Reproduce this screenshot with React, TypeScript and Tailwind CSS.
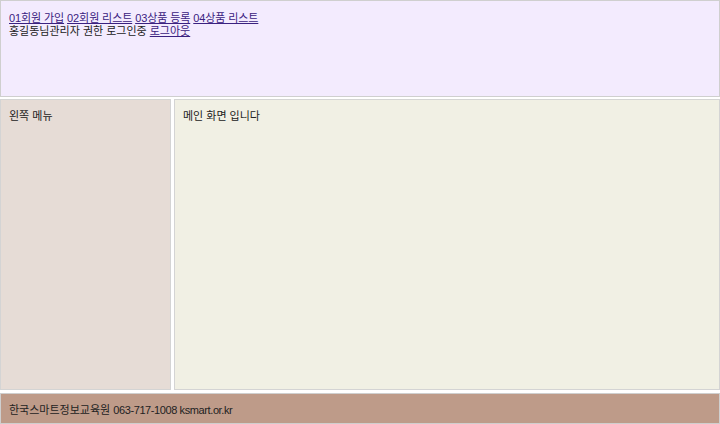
import React from 'react';

const menus = [
  { label: '01회원 가입', href: '#' },
  { label: '02회원 리스트', href: '#' },
  { label: '03상품 등록', href: '#' },
  { label: '04상품 리스트', href: '#' },
];

export default function App() {
  return (
    <div
      className="flex h-[424px] w-[720px] flex-col overflow-hidden bg-white text-[11px] leading-[13px] text-[#222]"
      style={{ fontFamily: '"Liberation Sans", "Noto Sans CJK KR", sans-serif' }}
    >
      {/* Header */}
      <div className="h-[97px] shrink-0 border border-[#cfcfcf] bg-[#f3ebfe] px-[8px] pt-[11px]">
        <div className="flex gap-[3px] tracking-[-0.1px]">
          {menus.map((m) => (
            <a key={m.label} href={m.href} className="text-[#3a2180] underline">
              {m.label}
            </a>
          ))}
        </div>
        <div>
          홍길동님관리자 권한 로그인중{' '}
          <a href="#" className="text-[#3a2180] underline">
            로그아웃
          </a>
        </div>
      </div>

      {/* Body */}
      <div className="mt-[2px] flex h-[291px] shrink-0 gap-[3px]">
        <div className="w-[171px] shrink-0 border border-[#d4d4d4] bg-[#e6dcd6] px-[8px] pt-[10px]">
          왼쪽 메뉴
        </div>
        <div className="flex-1 border border-[#d4d4d4] bg-[#f1f0e4] px-[8px] pt-[10px]">
          메인 화면 입니다
        </div>
      </div>

      {/* Footer */}
      <div className="mt-[3px] flex-1 border border-[#cfcfcf] bg-[#be9b89] px-[8px] pt-[10px]">
        한국스마트정보교육원 <span className="tracking-[-0.4px]">063-717-1008 ksmart.or.kr</span>
      </div>
    </div>
  );
}
